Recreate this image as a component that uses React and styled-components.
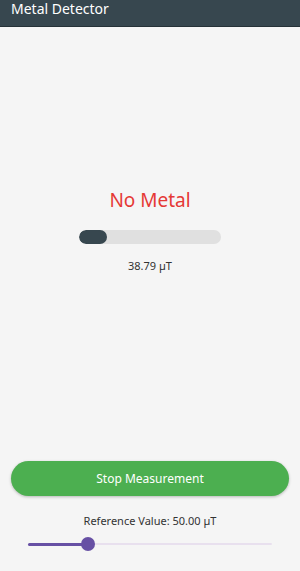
import React, { useState } from "react";
import styled, { createGlobalStyle } from "styled-components";

const GlobalStyle = createGlobalStyle`
  html, body { margin: 0; padding: 0; background: #f5f5f5; }
  body { font-family: "Noto Sans", "Open Sans", sans-serif; }
`;

const Page = styled.div`
  width: 300px;
  height: 571px;
  display: flex;
  flex-direction: column;
  background: #f5f5f5;
  overflow: hidden;
`;

const Header = styled.div`
  height: 26px;
  background: #37474f;
  border-bottom: 1px solid #263238;
  color: #fff;
  font-size: 14px;
  line-height: 18px;
  padding: 0 11px;
`;

const Content = styled.div`
  flex: 1;
  display: flex;
  flex-direction: column;
  align-items: center;
`;

const Status = styled.div`
  margin-top: 160px;
  color: ${p => p.color};
  font-size: 19px;
  line-height: 26px;
`;

const Track = styled.div`
  margin-top: 17px;
  width: 142px;
  height: 14px;
  border-radius: 7px;
  background: #e0e0e0;
  overflow: hidden;
`;

const Fill = styled.div`
  height: 100%;
  border-radius: 7px;
  background: #37474f;
`;

const Reading = styled.div`
  margin-top: 14px;
  font-size: 11px;
  line-height: 16px;
  color: #333;
`;

const Spacer = styled.div`
  flex: 1;
`;

const Button = styled.button`
  width: 278px;
  height: 35px;
  border: none;
  border-radius: 18px;
  background: #4caf50;
  color: #fff;
  font-family: inherit;
  font-size: 12px;
  box-shadow: 0 1px 3px rgba(0, 0, 0, 0.25);
`;

const RefLabel = styled.div`
  margin-top: 17px;
  font-size: 11px;
  line-height: 16px;
  color: #333;
`;

const SliderRow = styled.div`
  position: relative;
  width: 244px;
  height: 20px;
  margin: 5px 0 17px;
`;

const SliderLine = styled.div`
  position: absolute;
  left: 0;
  right: 0;
  top: 9px;
  height: 2px;
  border-radius: 1px;
  background: #e8e0ee;
`;

const SliderActive = styled.div`
  position: absolute;
  left: 0;
  top: 8.5px;
  height: 3px;
  border-radius: 2px;
  background: #6750a4;
`;

const Thumb = styled.div`
  position: absolute;
  top: 3px;
  width: 14px;
  height: 14px;
  margin-left: -7px;
  border-radius: 50%;
  background: #6750a4;
`;

export default function App() {
  const [measuring] = useState(true);
  const value = 38.79;
  const reference = 50;
  const max = 200;
  const sliderPos = (60 / 244) * 100;

  return (
    <Page>
      <GlobalStyle />
      <Header>Metal Detector</Header>
      <Content>
        <Status color="#e53935">No Metal</Status>
        <Track>
          <Fill style={{ width: `${(value / max) * 100}%` }} />
        </Track>
        <Reading>{value.toFixed(2)} µT</Reading>
        <Spacer />
        <Button>{measuring ? "Stop Measurement" : "Start Measurement"}</Button>
        <RefLabel>Reference Value: {reference.toFixed(2)} µT</RefLabel>
        <SliderRow>
          <SliderLine />
          <SliderActive style={{ width: `${sliderPos}%` }} />
          <Thumb style={{ left: `${sliderPos}%` }} />
        </SliderRow>
      </Content>
    </Page>
  );
}
